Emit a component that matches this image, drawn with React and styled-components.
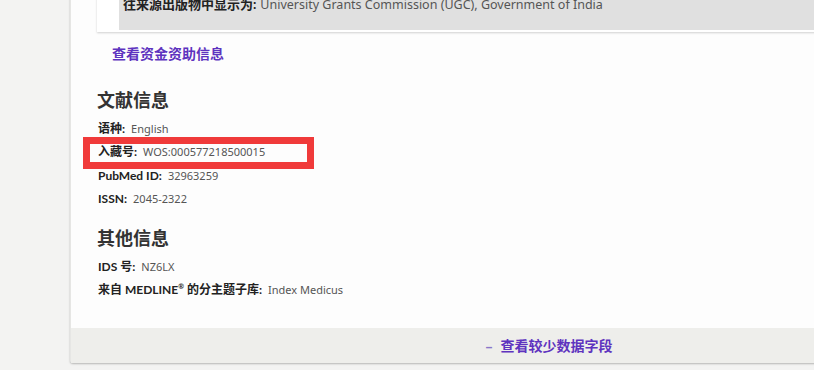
import React from 'react';
import styled, { createGlobalStyle } from 'styled-components';

const GlobalStyle = createGlobalStyle`
  html, body {
    margin: 0;
    padding: 0;
    background: #f3f3f2;
    font-family: "Noto Sans", "Noto Sans CJK SC", sans-serif;
  }
`;

const docFields = [
  { label: '语种', value: 'English' },
  { label: '入藏号', value: 'WOS:000577218500015', marked: true },
  { label: 'PubMed ID', value: '32963259' },
  { label: 'ISSN', value: '2045-2322' },
];

const App = () => {
  const otherFields = [
    { label: 'IDS 号', value: 'NZ6LX' },
    { label: <>来自 MEDLINE<Sup>®</Sup> 的分主题子库</>, value: 'Index Medicus' },
  ];

  return (
    <>
      <GlobalStyle />
      <Page>
        <Card>
          <Body>
            <FundingBox>
              <FundingInner>
                <Label $size={13} $gap={4}>往来源出版物中显示为:</Label>
                <FundingValue>University Grants Commission (UGC), Government of India</FundingValue>
              </FundingInner>
            </FundingBox>
            <FundingLink>查看资金资助信息</FundingLink>

            <Heading>文献信息</Heading>
            <FieldList>
              {docFields.map((f) => (
                <Field key={f.value}>
                  <Label>{f.label}:</Label>
                  <Value>{f.value}</Value>
                  {f.marked && <Highlight />}
                </Field>
              ))}
            </FieldList>

            <Heading>其他信息</Heading>
            <FieldList>
              {otherFields.map((f) => (
                <Field key={f.value}>
                  <Label>{f.label}:</Label>
                  <Value>{f.value}</Value>
                </Field>
              ))}
            </FieldList>
          </Body>
          <Footer>
            <Dash>–</Dash>
            查看较少数据字段
          </Footer>
        </Card>
      </Page>
    </>
  );
};

export default App;

const Page = styled.div`
  height: 370px;
  overflow: hidden;
  padding-left: 70px;
`;

const Card = styled.div`
  width: 956px;
  margin-top: -20px;
  background: #fdfdfd;
  border-left: 1px solid #e6e6e4;
  border-bottom-left-radius: 3px;
  box-shadow: 0 1px 2px rgba(0, 0, 0, 0.25);
`;

const Body = styled.div`
  padding: 0 0 26px 26px;
`;

const FundingBox = styled.div`
  background: #fff;
  padding: 0 0 2px 22px;
  box-shadow: 0 1px 2px rgba(0, 0, 0, 0.18);
`;

const FundingInner = styled.div`
  background: #e0e0e0;
  padding: 14px 0 15px 4px;
  line-height: 20px;
  display: flex;
  align-items: baseline;
`;

const FundingValue = styled.span`
  color: #555;
  font-size: 12.5px;
`;

const FundingLink = styled.div`
  margin-top: 12px;
  padding-left: 15px;
  font-size: 14px;
  line-height: 20px;
  font-weight: 600;
  color: #5e33bf;
`;

const Heading = styled.h3`
  margin: 24px 0 5px;
  font-size: 18px;
  line-height: 24px;
  font-weight: 700;
  color: #333;

  & + div + & {
    margin-top: 16px;
  }
`;

const FieldList = styled.div`
  display: flex;
  flex-direction: column;
`;

const Field = styled.div`
  position: relative;
  display: flex;
  align-items: baseline;
  line-height: 23.3px;
  padding-left: 1px;
`;

const Label = styled.span`
  font-family: Lato, "Noto Sans CJK SC", sans-serif;
  font-size: ${({ $size }) => $size || 12}px;
  font-weight: 700;
  color: #222;
  margin-right: ${({ $gap }) => $gap ?? 6}px;
`;

const Value = styled.span`
  font-size: 11px;
  color: #555;
`;

const Sup = styled.sup`
  font-size: 7px;
  line-height: 0;
`;

const Highlight = styled.div`
  position: absolute;
  left: -14px;
  top: -3px;
  width: 217px;
  height: 18px;
  border: 7px solid #f03a3a;
  pointer-events: none;
`;

const Footer = styled.div`
  height: 35px;
  display: flex;
  align-items: center;
  justify-content: center;
  background: #eeeeeb;
  font-size: 14px;
  font-weight: 600;
  color: #5e33bf;
`;

const Dash = styled.span`
  color: #8a76c9;
  margin-right: 8px;
`;
